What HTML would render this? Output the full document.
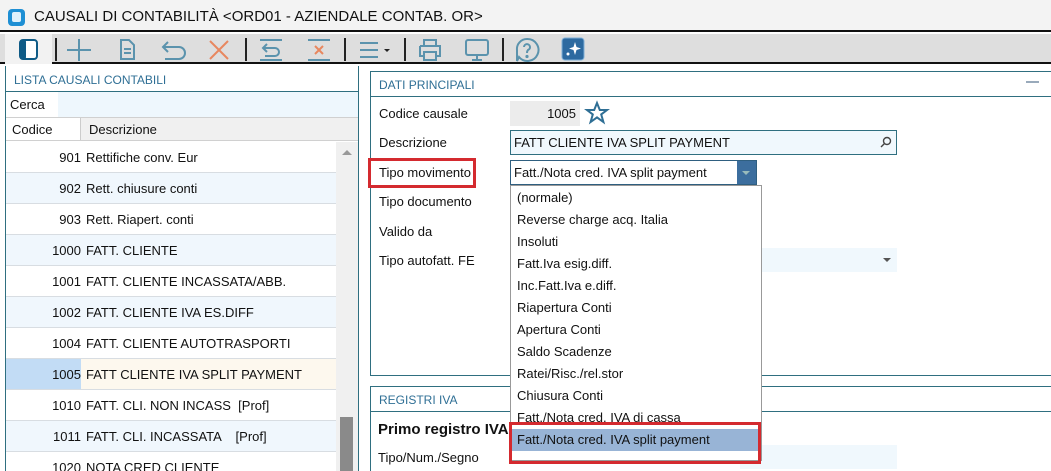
<!DOCTYPE html>
<html style="overflow:hidden"><head><meta charset="utf-8"><style>
*{box-sizing:border-box;margin:0;padding:0}
html,body{width:1051px;height:471px;overflow:hidden}
body{background:#fff;font-family:"Liberation Sans",sans-serif;font-size:13px;color:#111;position:relative}
.a{position:absolute}
.title{left:0;top:0;width:1051px;height:32px;background:#f3f3f3;border-bottom:2px solid #111}
.tb{left:0;top:34px;width:1051px;height:30px;background:#dedede;border-bottom:2px solid #111}
.sep{position:absolute;top:4px;width:2px;height:23px;background:#222}
.hdr{color:#2f6f95;font-size:12px}
.row{position:absolute;left:6px;width:330px;height:31px;border-bottom:1px solid #d8dde2;line-height:31px}
.row .c{position:absolute;left:0;width:75px;text-align:right}
.row .d{position:absolute;left:80px}
.dd div{height:22px;line-height:22px;padding-left:6px}
</style></head><body>
<div class="a title">
 <svg class="a" style="left:7px;top:8px" width="19" height="19"><rect x="1" y="1" width="17" height="17" rx="4" fill="#1e8fd4"/><rect x="5" y="4" width="9" height="10" rx="2" fill="#dff1fc"/></svg>
 <div class="a" style="left:34px;top:8px;font-size:15px;color:#111">CAUSALI DI CONTABILITÀ &lt;ORD01 - AZIENDALE CONTAB. OR&gt;</div>
</div>
<div class="a tb">
 <div class="a" style="left:5px;top:0;width:47px;height:30px;background:#f2f2f2"></div>
 <svg class="a" style="left:17px;top:4px" width="24" height="22"><rect x="3" y="2" width="17" height="19" rx="3" fill="#fff" stroke="#0f5b86" stroke-width="2"/><rect x="3" y="2" width="6" height="19" rx="2" fill="#0f5b86"/></svg>
 <div class="sep" style="left:55px"></div>
 <svg class="a" style="left:66px;top:4px" width="26" height="24" fill="none" stroke="#5b93ad" stroke-width="2"><path d="M13 1V23M1 12H25"/></svg>
 <svg class="a" style="left:116px;top:4px" width="22" height="24" fill="none" stroke="#5b93ad" stroke-width="2"><path d="M5 2H13L18 7V21H5Z"/><path d="M8 11H15M8 15H15"/></svg>
 <svg class="a" style="left:160px;top:5px" width="28" height="22" fill="none" stroke="#5b93ad" stroke-width="2"><path d="M8 3L3 8L8 13M3 8H19A6 6 0 0 1 19 20H5"/></svg>
 <svg class="a" style="left:207px;top:4px" width="24" height="24" fill="none" stroke="#e8875f" stroke-width="2"><path d="M3 3L21 21M21 3L3 21"/></svg>
 <div class="sep" style="left:245px"></div>
 <svg class="a" style="left:258px;top:4px" width="26" height="24" fill="none" stroke="#5b93ad" stroke-width="2"><path d="M2 2H24M2 22H24M9 6L5 10L9 14M5 10H17A4 4 0 0 1 17 18H7"/></svg>
 <svg class="a" style="left:306px;top:4px" width="26" height="24" fill="none" stroke-width="2"><path d="M2 2H24M2 22H24" stroke="#5b93ad"/><path d="M9 8L17 16M17 8L9 16" stroke="#e8875f"/></svg>
 <div class="sep" style="left:344px"></div>
 <svg class="a" style="left:358px;top:5px" width="36" height="22" fill="none" stroke="#5b93ad" stroke-width="2"><path d="M2 4H20M2 11H20M2 18H20"/><path d="M26 10H32L29 13Z" fill="#222" stroke="none"/></svg>
 <div class="sep" style="left:404px"></div>
 <svg class="a" style="left:417px;top:4px" width="26" height="24" fill="none" stroke="#5b93ad" stroke-width="2"><path d="M7 7V2H19V7M3 8H23V18H19M7 18H3V8M7 14H19V22H7Z"/></svg>
 <svg class="a" style="left:464px;top:4px" width="26" height="24" fill="none" stroke="#5b93ad" stroke-width="2"><rect x="2" y="2" width="22" height="15" rx="2"/><path d="M13 17V21M8 22H18"/></svg>
 <div class="sep" style="left:502px"></div>
 <svg class="a" style="left:514px;top:3px" width="26" height="26" fill="none" stroke="#5b93ad" stroke-width="2"><path d="M13 2A11 11 0 1 1 5 20L3 24L3 13A10 10 0 0 1 13 2Z"/><path d="M10 10A3 3 0 1 1 14 13Q13 14 13 16" /><circle cx="13" cy="19.5" r="0.6" fill="#5b93ad"/></svg>
 <svg class="a" style="left:561px;top:3px" width="24" height="24"><rect x="1" y="1" width="22" height="22" rx="3" fill="#2d6aa0" stroke="#7fb0d8"/><path d="M14 5L15.5 10L20 11.5L15.5 13L14 18L12.5 13L8 11.5L12.5 10Z" fill="#fff"/><circle cx="7" cy="17" r="1.5" fill="#fff"/></svg>
</div>

<!-- left panel -->
<div class="a" style="left:5px;top:66px;width:354px;height:410px;border:1px solid #2f6f80;border-top:none"></div>
<div class="a hdr" style="left:14px;top:73px">LISTA CAUSALI CONTABILI</div>
<div class="a" style="left:5px;top:91px;width:354px;height:1px;background:#2f6f80"></div>
<div class="a" style="left:58px;top:92px;width:300px;height:25px;background:#eef7fd"></div>
<div class="a" style="left:10px;top:97px">Cerca</div>
<div class="a" style="left:6px;top:117px;width:352px;height:24px;background:#f0f0f0;border-top:1px solid #d0d0d0;border-bottom:1px solid #d0d0d0"></div>
<div class="a" style="left:6px;top:118px;width:75px;height:22px;background:#fff;border-right:1px solid #ccc"></div>
<div class="a" style="left:12px;top:122px">Codice</div>
<div class="a" style="left:89px;top:122px">Descrizione</div>
<div class="row" style="top:142px;background:#fff"><span class="c">901</span><span class="d">Rettifiche conv. Eur</span></div>
<div class="row" style="top:173px;background:#f0f7fd"><span class="c">902</span><span class="d">Rett. chiusure conti</span></div>
<div class="row" style="top:204px;background:#fff"><span class="c">903</span><span class="d">Rett. Riapert. conti</span></div>
<div class="row" style="top:235px;background:#f0f7fd"><span class="c">1000</span><span class="d">FATT. CLIENTE</span></div>
<div class="row" style="top:266px;background:#fff"><span class="c">1001</span><span class="d">FATT. CLIENTE INCASSATA/ABB.</span></div>
<div class="row" style="top:297px;background:#f0f7fd"><span class="c">1002</span><span class="d">FATT. CLIENTE IVA ES.DIFF</span></div>
<div class="row" style="top:328px;background:#fff"><span class="c">1004</span><span class="d">FATT. CLIENTE AUTOTRASPORTI</span></div>
<div class="row" style="top:359px;background:#fdf8ee"><span class="c" style="background:#c2dcf5;height:30px">1005</span><span class="d">FATT CLIENTE IVA SPLIT PAYMENT</span></div>
<div class="row" style="top:390px;background:#fff"><span class="c">1010</span><span class="d">FATT. CLI. NON INCASS &nbsp;[Prof]</span></div>
<div class="row" style="top:421px;background:#f0f7fd"><span class="c">1011</span><span class="d">FATT. CLI. INCASSATA &nbsp;&nbsp;&nbsp;[Prof]</span></div>
<div class="row" style="top:452px;background:#fff;height:19px;border:none;overflow:hidden"><span class="c">1020</span><span class="d">NOTA CRED CLIENTE</span></div>
<div class="a" style="left:336px;top:142px;width:22px;height:329px;background:#f0f0f0"></div>
<div class="a" style="left:342px;top:150px;width:0;height:0;border-left:5px solid transparent;border-right:5px solid transparent;border-bottom:5px solid #999"></div>
<div class="a" style="left:340px;top:417px;width:13px;height:54px;background:#8a8a8a"></div>

<!-- right panel -->
<div class="a" style="left:370px;top:71px;width:690px;height:305px;border:1px solid #2f6f80"></div>
<div class="a hdr" style="left:379px;top:78px">DATI PRINCIPALI</div>
<div class="a" style="left:1026px;top:81px;width:13px;height:2px;background:#9ab"></div>
<div class="a" style="left:370px;top:96px;width:690px;height:1px;background:#2f6f80"></div>
<div class="a" style="left:379px;top:106px">Codice causale</div>
<div class="a" style="left:510px;top:101px;width:70px;height:25px;background:#ececec;text-align:right;padding-right:4px;line-height:25px">1005</div>
<svg class="a" style="left:584px;top:100px" width="26" height="26" fill="none" stroke="#2f6f95" stroke-width="2"><path d="M13 3L15.8 10H23L17.2 14.4L19.4 22L13 17.4L6.6 22L8.8 14.4L3 10H10.2Z"/></svg>
<div class="a" style="left:379px;top:135px">Descrizione</div>
<div class="a" style="left:510px;top:130px;width:387px;height:25px;background:#f0f8fd;border:1px solid #2f6f80;line-height:23px;padding-left:3px">FATT CLIENTE IVA SPLIT PAYMENT</div>
<svg class="a" style="left:880px;top:136px" width="12" height="12" fill="none" stroke="#444" stroke-width="1.4"><circle cx="7" cy="5" r="3.5"/><path d="M4.5 7.5L1 11"/></svg>
<div class="a" style="left:368px;top:158px;width:108px;height:30px;border:3px solid #d42a2f"></div>
<div class="a" style="left:379px;top:165px">Tipo movimento</div>
<div class="a" style="left:510px;top:160px;width:247px;height:25px;background:#fff;border:1px solid #2f5f80;line-height:23px;padding-left:3px">Fatt./Nota cred. IVA split payment</div>
<div class="a" style="left:737px;top:161px;width:19px;height:23px;background:#3c6e9e"></div>
<div class="a" style="left:742px;top:171px;border-left:4px solid transparent;border-right:4px solid transparent;border-top:4px solid #9bb"></div>
<div class="a" style="left:379px;top:194px">Tipo documento</div>
<div class="a" style="left:379px;top:224px">Valido da</div>
<div class="a" style="left:379px;top:253px">Tipo autofatt. FE</div>
<div class="a" style="left:740px;top:248px;width:157px;height:24px;background:#f0f8fd"></div>
<div class="a" style="left:883px;top:258px;border-left:4px solid transparent;border-right:4px solid transparent;border-top:4px solid #555"></div>

<div class="a" style="left:370px;top:386px;width:690px;height:100px;border:1px solid #2f6f80"></div>
<div class="a hdr" style="left:379px;top:393px">REGISTRI IVA</div>
<div class="a" style="left:370px;top:411px;width:690px;height:1px;background:#2f6f80"></div>
<div class="a" style="left:378px;top:421px;font-weight:bold;font-size:15px">Primo registro IVA</div>
<div class="a" style="left:378px;top:450px">Tipo/Num./Segno</div>
<div class="a" style="left:740px;top:445px;width:157px;height:24px;background:#f0f8fd"></div>

<!-- dropdown -->
<div class="a dd" style="left:510px;top:185px;width:252px;height:276px;background:#fff;border:1px solid #999;padding-top:1px">
<div>(normale)</div><div>Reverse charge acq. Italia</div><div>Insoluti</div><div>Fatt.Iva esig.diff.</div><div>Inc.Fatt.Iva e.diff.</div><div>Riapertura Conti</div><div>Apertura Conti</div><div>Saldo Scadenze</div><div>Ratei/Risc./rel.stor</div><div>Chiusura Conti</div><div>Fatt./Nota cred. IVA di cassa</div><div style="background:#98b4d6">Fatt./Nota cred. IVA split payment</div>
</div>
<div class="a" style="left:509px;top:422px;width:252px;height:42px;border:3px solid #d42a2f"></div>
</body></html>
